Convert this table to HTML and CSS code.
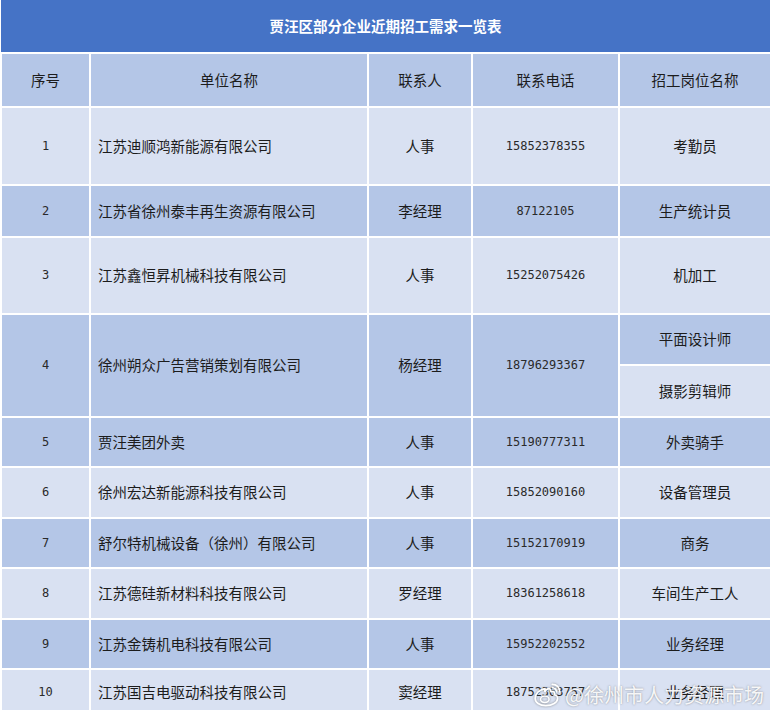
FILE: index.html
```html
<!DOCTYPE html>
<html lang="zh-CN">
<head>
<meta charset="utf-8">
<title>贾汪区部分企业近期招工需求一览表</title>
<link rel="stylesheet" href="styles.css">
</head>
<body>
<div class="page">
<table class="jobs">
  <colgroup>
    <col class="c1"><col class="c2"><col class="c3"><col class="c4"><col class="c5">
  </colgroup>
  <tr class="title"><td colspan="5">贾汪区部分企业近期招工需求一览表</td></tr>
  <tr class="head dark"><td>序号</td><td>单位名称</td><td>联系人</td><td>联系电话</td><td>招工岗位名称</td></tr>
  <tr class="light h76"><td class="num">1</td><td class="name">江苏迪顺鸿新能源有限公司</td><td>人事</td><td class="num">15852378355</td><td>考勤员</td></tr>
  <tr class="dark h50"><td class="num">2</td><td class="name">江苏省徐州泰丰再生资源有限公司</td><td>李经理</td><td class="num">87122105</td><td>生产统计员</td></tr>
  <tr class="light h75"><td class="num">3</td><td class="name">江苏鑫恒昇机械科技有限公司</td><td>人事</td><td class="num">15252075426</td><td>机加工</td></tr>
  <tr class="dark h50"><td class="num" rowspan="2">4</td><td class="name" rowspan="2">徐州朔众广告营销策划有限公司</td><td rowspan="2">杨经理</td><td class="num" rowspan="2">18796293367</td><td>平面设计师</td></tr>
  <tr class="light h50"><td>摄影剪辑师</td></tr>
  <tr class="dark h49"><td class="num">5</td><td class="name">贾汪美团外卖</td><td>人事</td><td class="num">15190777311</td><td>外卖骑手</td></tr>
  <tr class="light h49"><td class="num">6</td><td class="name">徐州宏达新能源科技有限公司</td><td>人事</td><td class="num">15852090160</td><td>设备管理员</td></tr>
  <tr class="dark h49"><td class="num">7</td><td class="name">舒尔特机械设备（徐州）有限公司</td><td>人事</td><td class="num">15152170919</td><td>商务</td></tr>
  <tr class="light h49"><td class="num">8</td><td class="name">江苏德硅新材料科技有限公司</td><td>罗经理</td><td class="num">18361258618</td><td>车间生产工人</td></tr>
  <tr class="dark h49"><td class="num">9</td><td class="name">江苏金铸机电科技有限公司</td><td>人事</td><td class="num">15952202552</td><td>业务经理</td></tr>
  <tr class="light last"><td class="num">10</td><td class="name">江苏国吉电驱动科技有限公司</td><td>窦经理</td><td class="num">18752363757</td><td>业务经理</td></tr>
</table>
<div class="watermark">
  <svg class="wb" width="30" height="26" viewBox="0 0 28 24">
    <path d="M11 6c-5 1-9 5-9 9 0 4 4 7 10 7 6 0 11-3 11-7 0-2-2-3-3-3 1-2 0-4-3-3-1 0 0-3-2-3-1 0-3 1-4 3z" fill="none" stroke="#fff" stroke-width="1.6"/>
    <ellipse cx="11" cy="16" rx="4" ry="3" fill="none" stroke="#fff" stroke-width="1.4"/>
    <path d="M18 2c4 0 7 3 7 7M18 5c2 0 4 2 4 4" fill="none" stroke="#fff" stroke-width="1.6" stroke-linecap="round"/>
  </svg>
  <span>@徐州市人力资源市场</span>
</div>
</div>
</body>
</html>
```
FILE: styles.css
```css
html, body {
  margin: 0;
  padding: 0;
  background: #ffffff;
}
.page {
  position: relative;
  width: 772px;
  height: 714px;
  overflow: hidden;
}
.jobs {
  width: 770px;
  border-collapse: collapse;
  table-layout: fixed;
  font-family: "Noto Sans CJK SC", "Liberation Sans", sans-serif;
  font-size: 14.5px;
  color: #1c1c1c;
  border-right: 1px solid #9fb0c8;
  border-bottom: 1px solid #a9b3c2;
}
.c1 { width: 89px; }
.c2 { width: 278px; }
.c3 { width: 104px; }
.c4 { width: 147px; }
.c5 { width: 152px; }
.jobs td {
  border: 2px solid #ffffff;
  text-align: center;
  vertical-align: middle;
  padding: 0;
  line-height: 18px;
}
.jobs td.name {
  text-align: left;
  padding-left: 7px;
}
.jobs td.num {
  font-family: "DejaVu Sans Mono", "Liberation Mono", monospace;
  font-size: 12px;
  color: #2a2a2a;
}
.title td {
  background: #4573c6;
  color: #ffffff;
  font-weight: bold;
  height: 52px;
  border-top: 0;
  border-left: 0;
}
.head td {
  height: 52px;
}
.dark td { background: #b4c6e7; }
.light td { background: #d9e1f2; }
.h76 td { height: 76px; }
.h75 td { height: 75px; }
.h50 td { height: 49.5px; }
.h49 td { height: 48.5px; }
.last td {
  height: 36px;
  padding-top: 4px;
}
.watermark {
  position: absolute;
  left: 533px;
  top: 682px;
  display: flex;
  align-items: center;
  gap: 2px;
  white-space: nowrap;
  color: rgba(255, 255, 255, 0.92);
  font-family: "Noto Sans CJK SC", sans-serif;
  font-size: 20px;
  line-height: 26px;
  text-shadow: 0 0 2px rgba(80, 80, 80, 0.6);
}
.wb { filter: drop-shadow(0 0 1px rgba(80,80,80,0.6)); }
```
